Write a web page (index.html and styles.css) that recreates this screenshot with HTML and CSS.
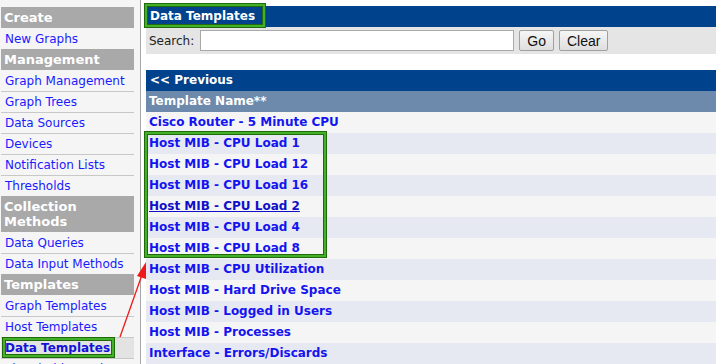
FILE: index.html
```html
<!DOCTYPE html>
<html lang="en">
<head>
  <meta charset="UTF-8" />
  <title>Data Templates</title>
  <link rel="stylesheet" href="styles.css">
</head>
<body>
  <div class="page">
    <div class="menu">
      <div class="menu-head">Create</div>
      <a class="menu-item" href="#">New Graphs</a>
      <div class="menu-head">Management</div>
      <a class="menu-item" href="#">Graph Management</a>
      <a class="menu-item" href="#">Graph Trees</a>
      <a class="menu-item" href="#">Data Sources</a>
      <a class="menu-item" href="#">Devices</a>
      <a class="menu-item" href="#">Notification Lists</a>
      <a class="menu-item" href="#">Thresholds</a>
      <div class="menu-head tall">Collection Methods</div>
      <a class="menu-item" href="#">Data Queries</a>
      <a class="menu-item" href="#">Data Input Methods</a>
      <div class="menu-head">Templates</div>
      <a class="menu-item" href="#">Graph Templates</a>
      <a class="menu-item" href="#">Host Templates</a>
      <a class="menu-item selected" href="#">Data Templates</a>
      <a class="menu-item" href="#">Threshold Templates</a>
    </div>

    <div class="main">
      <div class="title-bar">Data Templates</div>
      <div class="search-row">
        <label for="filter">Search:</label>
        <input id="filter" type="text">
        <button>Go</button>
        <button>Clear</button>
      </div>

      <div class="nav-bar">&lt;&lt; Previous</div>
      <div class="col-head">Template Name**</div>
      <div class="rows">
        <a class="row" href="#">Cisco Router - 5 Minute CPU</a>
        <a class="row" href="#">Host MIB - CPU Load 1</a>
        <a class="row" href="#">Host MIB - CPU Load 12</a>
        <a class="row" href="#">Host MIB - CPU Load 16</a>
        <a class="row hover" href="#">Host MIB - CPU Load 2</a>
        <a class="row" href="#">Host MIB - CPU Load 4</a>
        <a class="row" href="#">Host MIB - CPU Load 8</a>
        <a class="row" href="#">Host MIB - CPU Utilization</a>
        <a class="row" href="#">Host MIB - Hard Drive Space</a>
        <a class="row" href="#">Host MIB - Logged in Users</a>
        <a class="row" href="#">Host MIB - Processes</a>
        <a class="row" href="#">Interface - Errors/Discards</a>
      </div>
    </div>
  </div>

  <!-- annotation marks -->
  <div class="mark mark-title"></div>
  <div class="mark mark-rows"></div>
  <div class="mark mark-menu"></div>
  <svg class="arrow" width="716" height="364" viewBox="0 0 716 364">
    <line x1="120" y1="337" x2="143" y2="272" stroke="#f01818" stroke-width="1.3"/>
    <polygon points="146,262 137,276 146,279" fill="#f01818"/>
  </svg>
</body>
</html>
```

FILE: styles.css
```css
body {
  margin: 0;
  font-family: "DejaVu Sans", Verdana, sans-serif;
  font-size: 12px;
  background: #fff;
  overflow: hidden;
}
.page {
  display: flex;
  align-items: flex-start;
  height: 364px;
}
.menu {
  width: 133px;
  height: 100%;
  padding: 7px 6px 0 1px;
  background: #f5f5f5;
  border-right: 1px solid #a8a8a8;
  display: flex;
  flex-direction: column;
  flex-shrink: 0;
  overflow: hidden;
}
.menu > * {
  flex-shrink: 0;
}
.menu-head {
  background: #a9a9a9;
  color: #fff;
  font-weight: bold;
  font-size: 13px;
  height: 21px;
  line-height: 21px;
  padding-left: 3px;
}
.menu-head.tall {
  height: 36px;
  line-height: 15px;
  padding-top: 3px;
  padding-right: 30px;
  box-sizing: border-box;
}
.menu-item {
  color: #1a1aff;
  text-decoration: none;
  height: 20px;
  line-height: 20px;
  padding-left: 4px;
  border-top: 1px solid #c8c8c8;
  white-space: nowrap;
}
.menu-head + .menu-item {
  border-top-color: transparent;
}
.menu-item.selected {
  background: #e3e3e3;
  font-weight: bold;
  color: #1212d8;
}
.main {
  flex: 1;
  margin-left: 5px;
  padding-top: 6px;
}
.title-bar, .nav-bar {
  background: #00438c;
  color: #fff;
  font-weight: bold;
  height: 21px;
  line-height: 21px;
  padding-left: 4px;
}
.search-row {
  background: #e5e5e5;
  height: 27px;
  display: flex;
  align-items: center;
  padding-left: 3px;
  margin-bottom: 16px;
}
.search-row label {
  color: #222;
  margin-right: 6px;
}
.search-row input {
  width: 310px;
  height: 17px;
  border: 1px solid #a9a9a9;
  padding: 1px;
  margin: 0 4px 0 0;
}
.search-row button {
  font-family: "Liberation Sans", Arial, sans-serif;
  font-size: 14px;
  height: 21px;
  padding: 0 7px;
  margin: 0 4px 0 1px;
  border: 1px solid #a0a0a0;
  border-radius: 2px;
  background: linear-gradient(#f6f6f6, #dedede);
  color: #111;
}
.col-head {
  background: #6d89ab;
  color: #fff;
  font-weight: bold;
  height: 21px;
  line-height: 21px;
  padding-left: 3px;
}
.rows {
  display: flex;
  flex-direction: column;
}
.row {
  height: 21px;
  line-height: 21px;
  padding-left: 3px;
  font-weight: bold;
  color: #1414f0;
  text-decoration: none;
  background: #f5f5f5;
}
.row:nth-child(even) {
  background: #e7e9f2;
}
.row.hover {
  text-decoration: underline;
  color: #1010c8;
}
.mark {
  position: absolute;
  border: 2px solid #44b02a;
  box-shadow: 0 0 0 1px #1f6b0c, inset 0 0 0 1px #1f6b0c;
}
.mark-title {
  left: 145px;
  top: 4px;
  width: 116px;
  height: 19px;
}
.mark-rows {
  left: 145px;
  top: 132px;
  width: 177px;
  height: 121px;
}
.mark-menu {
  left: 3px;
  top: 338px;
  width: 107px;
  height: 15px;
}
.arrow {
  position: absolute;
  left: 0;
  top: 0;
  pointer-events: none;
}
```
